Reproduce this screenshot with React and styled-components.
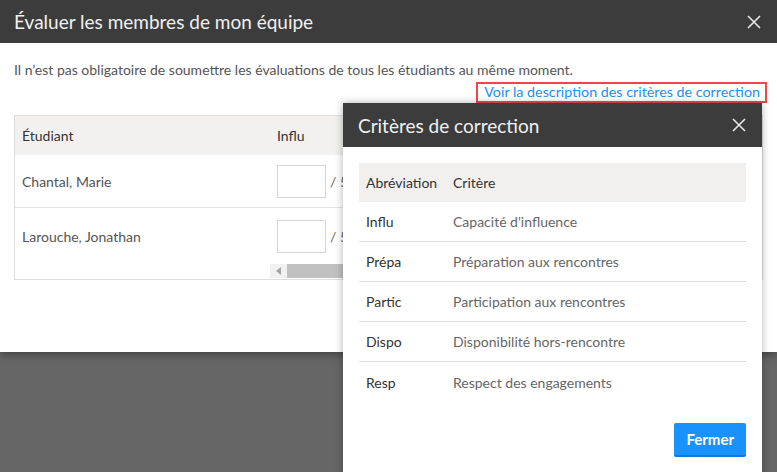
import React from 'react';
import styled, { createGlobalStyle } from 'styled-components';

const GlobalStyle = createGlobalStyle`
  html, body {
    margin: 0;
    padding: 0;
    background: #666;
    font-family: Lato, "Noto Sans", sans-serif;
  }
  * {
    box-sizing: border-box;
  }
`;

const Page = styled.div`
  position: relative;
  width: 777px;
  height: 472px;
  overflow: hidden;
  background: #666;
`;

const Modal = styled.div`
  background: #fff;
  box-shadow: 0 3px 8px rgba(0, 0, 0, 0.35);
`;

const Header = styled.div`
  display: flex;
  align-items: center;
  justify-content: space-between;
  height: ${(p) => p.h}px;
  padding: 0 ${(p) => p.pr}px 0 ${(p) => p.pl}px;
  background: #3c3c3c;
  color: #f0f0f0;
`;

const Title = styled.h1`
  margin: 0;
  font-size: 19px;
  font-weight: 400;
`;

const CloseBtn = styled.button`
  display: flex;
  padding: 0;
  border: 0;
  background: none;
  cursor: pointer;
`;

const Body = styled.div`
  height: 309px;
  padding: 18px 10px 0 14px;
`;

const Intro = styled.p`
  margin: 0;
  font-size: 14px;
  line-height: 18px;
  color: #555;
`;

const LinkRow = styled.div`
  display: flex;
  justify-content: flex-end;
  margin-top: 3px;
`;

const CriteriaLink = styled.a`
  display: block;
  padding: 0 5px 1px 6px;
  border: 2px solid #f0454b;
  font-size: 14.3px;
  line-height: 16px;
  color: #1f8ff0;
  text-decoration: none;
`;

const TableBox = styled.div`
  margin-top: 12px;
  margin-right: 4px;
  border: 1px solid #dedede;
`;

const GridRow = styled.div`
  display: grid;
  grid-template-columns: 262px 1fr;
  align-items: center;
  height: ${(p) => p.h}px;
  background: ${(p) => (p.head ? '#f2f1f0' : '#fff')};
  border-bottom: ${(p) => (p.line ? '1px solid #e4e4e4' : '0')};
`;

const Cell = styled.div`
  padding-left: ${(p) => (p.first ? 7 : 0)}px;
  font-size: 14px;
  color: ${(p) => (p.head ? '#333' : '#555')};
  display: flex;
  align-items: center;
`;

const ScoreInput = styled.input`
  width: 49px;
  height: 33px;
  border: 1px solid #d6d6d6;
  background: #fff;
  margin: 0 4px 0 0;
`;

const OutOf = styled.span`
  font-size: 14px;
  color: #666;
`;

const ScrollBar = styled.div`
  display: flex;
  height: 14px;
  margin: 0 0 1px 255px;
  background: #f1f1f1;
`;

const ScrollArrow = styled.div`
  display: flex;
  align-items: center;
  justify-content: center;
  width: 17px;
  height: 14px;
`;

const ScrollThumb = styled.div`
  flex: 1;
  background: #c1c1c1;
`;

const CriteriaModal = styled.div`
  position: absolute;
  left: 343px;
  top: 103px;
  width: 419px;
  height: 390px;
  background: #fff;
  box-shadow: 0 0 8px rgba(0, 0, 0, 0.3);
`;

const CriteriaBody = styled.div`
  padding: 16px 16px 0 16px;
`;

const CritRow = styled.div`
  display: grid;
  grid-template-columns: 94px 1fr;
  align-items: center;
  height: ${(p) => (p.head ? 39 : 40)}px;
  background: ${(p) => (p.head ? '#f1f0ef' : '#fff')};
  border-bottom: ${(p) => (p.line ? '1px solid #dcdcdc' : '0')};
  font-size: 14px;
`;

const Abbr = styled.div`
  padding-left: 7px;
  color: #333;
`;

const Desc = styled.div`
  color: ${(p) => (p.head ? '#333' : '#666')};
`;

const Footer = styled.div`
  display: flex;
  justify-content: flex-end;
  margin-top: 21px;
`;

const PrimaryButton = styled.button`
  height: 34px;
  padding: 0 12px;
  border: 0;
  border-bottom: 2px solid #1279d6;
  border-radius: 2px;
  background: #1a92fb;
  color: #fff;
  font-family: inherit;
  font-size: 15px;
  font-weight: 700;
`;

const CloseIcon = ({ size = 14 }) => (
  <svg width={size} height={size} viewBox="0 0 14 14">
    <path d="M1 1L13 13M13 1L1 13" stroke="#e8e8e8" strokeWidth="1.6" />
  </svg>
);

const students = ['Chantal, Marie', 'Larouche, Jonathan'];

const criteria = [
  { key: 'Influ', value: "Capacité d'influence" },
  { key: 'Prépa', value: 'Préparation aux rencontres' },
  { key: 'Partic', value: 'Participation aux rencontres' },
  { key: 'Dispo', value: 'Disponibilité hors-rencontre' },
  { key: 'Resp', value: 'Respect des engagements' },
];

const App = () => {
  return (
    <Page>
      <GlobalStyle />
      <Modal>
        <Header h={43} pl={14} pr={16}>
          <Title>Évaluer les membres de mon équipe</Title>
          <CloseBtn><CloseIcon /></CloseBtn>
        </Header>
        <Body>
          <Intro>Il n’est pas obligatoire de soumettre les évaluations de tous les étudiants au même moment.</Intro>
          <LinkRow>
            <CriteriaLink href="#">Voir la description des critères de correction</CriteriaLink>
          </LinkRow>
          <TableBox>
            <GridRow head h={39}>
              <Cell first head>Étudiant</Cell>
              <Cell head>Influ</Cell>
            </GridRow>
            {students.map((name, i) => (
              <GridRow key={name} h={i === 0 ? 53 : 56} line={i === 0}>
                <Cell first>{name}</Cell>
                <Cell>
                  <ScoreInput type="text" />
                  <OutOf>/ 5</OutOf>
                </Cell>
              </GridRow>
            ))}
            <ScrollBar>
              <ScrollArrow>
                <svg width="5" height="8" viewBox="0 0 5 8"><path d="M5 0L0 4L5 8Z" fill="#a3a3a3" /></svg>
              </ScrollArrow>
              <ScrollThumb />
            </ScrollBar>
          </TableBox>
        </Body>
      </Modal>

      <CriteriaModal>
        <Header h={44} pl={15} pr={16}>
          <Title>Critères de correction</Title>
          <CloseBtn><CloseIcon /></CloseBtn>
        </Header>
        <CriteriaBody>
          <CritRow head>
            <Abbr>Abréviation</Abbr>
            <Desc head>Critère</Desc>
          </CritRow>
          {criteria.map((c, i) => (
            <CritRow key={c.key} line={i < criteria.length - 1}>
              <Abbr>{c.key}</Abbr>
              <Desc>{c.value}</Desc>
            </CritRow>
          ))}
          <Footer>
            <PrimaryButton>Fermer</PrimaryButton>
          </Footer>
        </CriteriaBody>
      </CriteriaModal>
    </Page>
  );
};

export default App;
